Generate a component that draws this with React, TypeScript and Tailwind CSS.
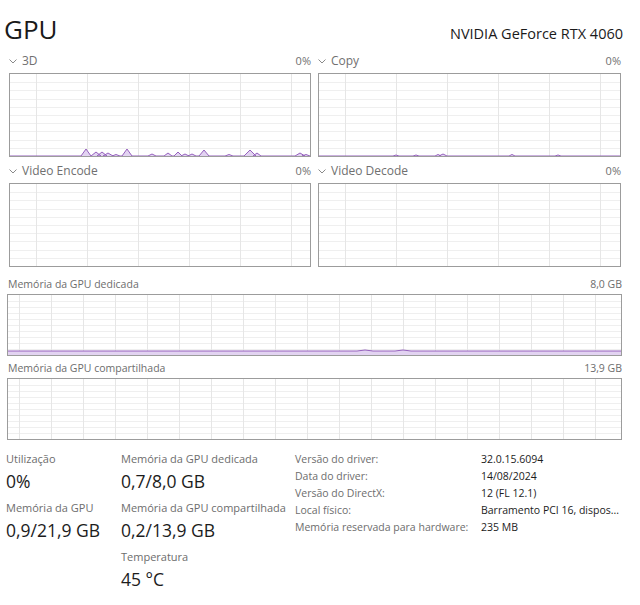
import React from "react";

type Spike = [number, number, number];

const PURPLE = "#9561bd";
const LAVENDER = "#e2d3f1";

function Chevron() {
  return (
    <svg width="8" height="5" viewBox="0 0 8 5" className="mr-[5px] mt-[1px]">
      <path d="M0.5 0.5 L4 4 L7.5 0.5" fill="none" stroke="#8a8a8a" strokeWidth="1" />
    </svg>
  );
}

function Graph({
  w,
  h,
  vStart,
  vStep,
  rows,
  spikes = [],
  base = 0,
}: {
  w: number;
  h: number;
  vStart: number;
  vStep: number;
  rows: number;
  spikes?: Spike[];
  base?: number;
}) {
  const vLines: number[] = [];
  for (let x = vStart; x < w; x += vStep) vLines.push(Math.round(x) + 0.5);
  const hLines: number[] = [];
  for (let i = 1; i < rows; i++) hLines.push(Math.round((i * h) / rows) + 0.5);

  const floor = h - base;
  const pts: string[] = [`0,${floor}`];
  [...spikes]
    .sort((a, b) => a[0] - b[0])
    .forEach(([cx, ht, hw]) => {
      pts.push(`${cx - hw},${floor}`, `${cx},${floor - ht}`, `${cx + hw},${floor}`);
    });
  pts.push(`${w},${floor}`);
  const area = `${pts.join(" ")} ${w},${h} 0,${h}`;

  return (
    <svg width={w} height={h} className="block">
      {hLines.map((y) => (
        <line key={"h" + y} x1={0} x2={w} y1={y} y2={y} stroke="#efefef" strokeWidth="1" />
      ))}
      {vLines.map((x) => (
        <line key={"v" + x} x1={x} x2={x} y1={0} y2={h} stroke="#e6e6e6" strokeWidth="1" />
      ))}
      {(spikes.length > 0 || base > 0) && (
        <>
          <polygon points={area} fill={LAVENDER} />
          <polyline points={pts.join(" ")} fill="none" stroke={PURPLE} strokeWidth="1" />
        </>
      )}
    </svg>
  );
}

function EngineCell({
  label,
  width,
  height,
  spikes,
}: {
  label: string;
  width: number;
  height: number;
  spikes?: Spike[];
}) {
  return (
    <div>
      <div className="flex h-[16px] items-center justify-between text-[12px] leading-[16px] text-[#707070]">
        <span className="flex items-center">
          <Chevron />
          {label}
        </span>
        <span className="text-[11px]">0%</span>
      </div>
      <div className="mt-[4px] border border-[#9c9c9c]" style={{ width, height }}>
        <Graph w={width - 2} h={height - 2} vStart={26} vStep={51} rows={10} spikes={spikes} />
      </div>
    </div>
  );
}

const spikes3d: Spike[] = [
  [76, 7, 5],
  [86, 4, 5],
  [92, 4, 5],
  [98, 3, 5],
  [106, 1.5, 4],
  [117, 7, 5],
  [142, 2, 4],
  [158, 3, 4],
  [168, 4, 4],
  [175, 2, 4],
  [182, 2, 4],
  [194, 6, 5],
  [219, 1.5, 4],
  [240, 6, 6],
  [247, 3, 4],
  [290, 3, 5],
  [296, 1.5, 4],
];

const spikesCopy: Spike[] = [
  [77, 1, 3],
  [97, 1, 3],
  [119, 1.5, 3],
  [124, 2, 4],
  [193, 1.5, 3],
  [239, 1, 3],
];

const details: [string, string][] = [
  ["Versão do driver:", "32.0.15.6094"],
  ["Data do driver:", "14/08/2024"],
  ["Versão do DirectX:", "12 (FL 12.1)"],
  ["Local físico:", "Barramento PCI 16, dispos..."],
  ["Memória reservada para hardware:", "235 MB"],
];

function Stat({ label, value }: { label: string; value: string }) {
  return (
    <div className="whitespace-nowrap">
      <div className="text-[11px] leading-[20px] text-[#6d6d6d]">{label}</div>
      <div className="text-[17.5px] leading-[24px] text-[#1c1c1c]">{value}</div>
    </div>
  );
}

export default function App() {
  return (
    <div className="h-[605px] w-[640px] overflow-hidden bg-white font-['Open_Sans','Noto_Sans',sans-serif]">
      <div className="flex items-baseline justify-between pl-[4px] pr-[17px] pt-[13px]">
        <span className="text-[26px] leading-[32px] text-[#1a1a1a]">GPU</span>
        <span className="text-[14.5px] leading-[20px] text-[#1a1a1a]">NVIDIA GeForce RTX 4060</span>
      </div>

      <div className="ml-[9px] mt-[8px] grid grid-cols-[302px_303px] gap-x-[7px] gap-y-[6px]">
        <EngineCell label="3D" width={302} height={84} spikes={spikes3d} />
        <EngineCell label="Copy" width={303} height={84} spikes={spikesCopy} />
        <EngineCell label="Video Encode" width={302} height={84} />
        <EngineCell label="Video Decode" width={303} height={84} />
      </div>

      <div className="ml-[7px] w-[615px]">
        <div className="mt-[9px] flex h-[16px] justify-between pl-[1px] text-[10.5px] leading-[16px] text-[#6d6d6d]">
          <span>Memória da GPU dedicada</span>
          <span>8,0 GB</span>
        </div>
        <div className="mt-[2px] h-[62px] border border-[#9c9c9c]">
          <Graph
            w={613}
            h={60}
            vStart={11}
            vStep={32}
            rows={10}
            base={4}
            spikes={[
              [357, 1, 8],
              [395, 1, 8],
            ]}
          />
        </div>
        <div className="mt-[4px] flex h-[16px] justify-between pl-[1px] text-[10.5px] leading-[16px] text-[#6d6d6d]">
          <span>Memória da GPU compartilhada</span>
          <span>13,9 GB</span>
        </div>
        <div className="mt-[2px] h-[62px] border border-[#9c9c9c]">
          <Graph w={613} h={60} vStart={11} vStep={32} rows={10} />
        </div>
      </div>

      <div className="mt-[9px] flex items-start">
        <div className="ml-[6px] flex w-[115px] flex-col gap-[5px]">
          <Stat label="Utilização" value="0%" />
          <Stat label="Memória da GPU" value="0,9/21,9 GB" />
        </div>
        <div className="flex w-[174px] flex-col gap-[5px]">
          <Stat label="Memória da GPU dedicada" value="0,7/8,0 GB" />
          <Stat label="Memória da GPU compartilhada" value="0,2/13,9 GB" />
          <Stat label="Temperatura" value="45 °C" />
        </div>
        <div className="mt-[2px] grid grid-cols-[186px_auto] content-start text-[10.5px] leading-[17px] whitespace-nowrap">
          {details.map(([k, v]) => (
            <React.Fragment key={k}>
              <span className="text-[#6d6d6d]">{k}</span>
              <span className="text-[#1c1c1c]">{v}</span>
            </React.Fragment>
          ))}
        </div>
      </div>
    </div>
  );
}
